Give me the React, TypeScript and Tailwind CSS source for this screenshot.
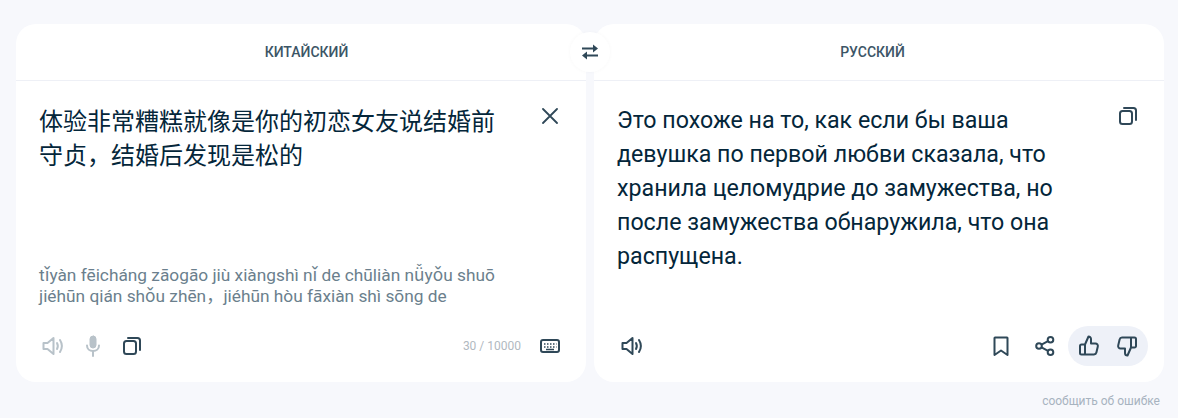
import React from 'react';

const ink = '#2f4858';

function Speaker({ color }: { color: string }) {
  return (
    <svg width="22" height="22" viewBox="0 0 22 22" fill="none" stroke={color} strokeWidth="2" strokeLinejoin="round" strokeLinecap="round">
      <path d="M1.500 8v6h4L11.500 19V3L5.500 8h-4z" />
      <path d="M15 8c1 1.800 1 4.200 0 6" />
      <path d="M18 5c2.200 3.500 2.200 8.500 0 12" />
    </svg>
  );
}

function Mic({ color }: { color: string }) {
  return (
    <svg width="22" height="22" viewBox="0 0 22 22" fill="none" stroke={color} strokeLinecap="round">
      <rect x="8" y="1" width="6" height="12" rx="3" fill={color} strokeWidth="1" />
      <path d="M5 10.500c0 3.500 2.600 5.500 6 5.500s6-2 6-5.500" strokeWidth="2" />
      <path d="M11 16v5" strokeWidth="2" />
    </svg>
  );
}

function Copy() {
  return (
    <svg width="20" height="20" viewBox="0 0 20 20" fill="none" stroke={ink} strokeWidth="2" strokeLinecap="round" strokeLinejoin="round">
      <rect x="2" y="5" width="12" height="13" rx="2.500" />
      <path d="M6 2h9.500A2.500 2.500 0 0 1 18 4.500V14" />
    </svg>
  );
}

function Keyboard() {
  return (
    <svg width="20" height="16" viewBox="0 0 20 16" fill="none">
      <rect x="1" y="2" width="18" height="12" rx="2" stroke={ink} strokeWidth="2" />
      <path d="M4 6h1.500M7 6h1.500M10 6h1.500M13 6h1.500M16 6h.5M4 9h1.500M7 9h1.500M10 9h1.500M13 9h1.500M16 9h.5M6 11.500h8" stroke={ink} strokeWidth="1.300" />
    </svg>
  );
}

function Bookmark() {
  return (
    <svg width="22" height="22" viewBox="0 0 22 22" fill="none" stroke={ink} strokeWidth="2" strokeLinejoin="round">
      <path d="M5 2.500h12a.5.5 0 0 1 .5.5v17L11 15.500 4.500 20V3a.5.5 0 0 1 .5-.5z" />
    </svg>
  );
}

function Share() {
  return (
    <svg width="22" height="22" viewBox="0 0 22 22" fill="none" stroke={ink} strokeWidth="2">
      <circle cx="5" cy="11" r="2.800" />
      <circle cx="16.500" cy="4.800" r="2.800" />
      <circle cx="16.500" cy="17.200" r="2.800" />
      <path d="M7.500 9.700l6.500-3.500M7.500 12.300l6.500 3.500" />
    </svg>
  );
}

function ThumbUp() {
  return (
    <svg width="22" height="22" viewBox="0 0 22 22" fill="none" stroke={ink} strokeWidth="2" strokeLinejoin="round" strokeLinecap="round">
      <path d="M7 9.500h-3.500a1.500 1.500 0 0 0-1.500 1.500v7a1.500 1.500 0 0 0 1.500 1.500H16a2.500 2.500 0 0 0 2.400-1.900l1.400-6a2.500 2.500 0 0 0-2.400-3.100H13V4a2.500 2.500 0 0 0-2.500-2.500L7 9.500v10" />
    </svg>
  );
}

function ThumbDown() {
  return (
    <svg width="22" height="22" viewBox="0 0 22 22" fill="none" stroke={ink} strokeWidth="2" strokeLinejoin="round" strokeLinecap="round">
      <path d="M15 12.500h3.500a1.500 1.500 0 0 0 1.500-1.500V4a1.500 1.500 0 0 0-1.500-1.500H6a2.500 2.500 0 0 0-2.400 1.900l-1.400 6a2.500 2.500 0 0 0 2.400 3.100H9V18a2.500 2.500 0 0 0 2.500 2.500l3.500-8v-10" />
    </svg>
  );
}

function Swap() {
  return (
    <svg width="16" height="16" viewBox="0 0 16 16" fill={ink}>
      <path d="M0 3.500h11v-3l5 4-5 4v-3H0z" />
      <path d="M16 10.500H5v-3l-5 4 5 4v-3h11z" />
    </svg>
  );
}

function X() {
  return (
    <svg width="16" height="16" viewBox="0 0 16 16" fill="none" stroke={ink} strokeWidth="1.800" strokeLinecap="round">
      <path d="M1 1l14 14M15 1L1 15" />
    </svg>
  );
}

export default function App() {
  return (
    <div className="flex h-[418px] w-[1178px] flex-col bg-[#f7f8fc] pl-4 pr-[14px] pt-6 font-['Roboto','Noto_Sans_CJK_SC',sans-serif]">
      <div className="relative flex h-[358px] gap-2">
        {/* source */}
        <div className="flex w-[570px] flex-col rounded-[20px] bg-white">
          <div className="flex h-[57px] shrink-0 items-center justify-center border-b border-[#eef0f6] pl-[11px] pt-[1px] text-[14px] font-medium text-[#3c5566]">
            КИТАЙСКИЙ
          </div>
          <div className="flex flex-1 flex-col pb-[25px] pl-[23px] pr-6 pt-[22px]">
            <div className="flex justify-between">
              <p className="w-[460px] text-[24px] leading-[34px] text-[#04263a] font-['Noto_Sans_CJK_SC','Roboto',sans-serif]">
                体验非常糟糕就像是你的初恋女友说结婚前守贞，结婚后发现是松的
              </p>
              <button className="mr-[4px] mt-[5px] h-4">
                <X />
              </button>
            </div>
            <p className="mt-auto w-[480px] text-[17.3px] leading-[21px] text-[#6b7f8d]">
              tǐyàn fēicháng zāogāo jiù xiàngshì nǐ de chūliàn nǚyǒu shuō jiéhūn qián shǒu zhēn，jiéhūn hòu fāxiàn shì sōng de
            </p>
            <div className="mt-[28px] flex items-center">
              <div className="flex items-center gap-[18px] pl-[3px]">
                <Speaker color="#b8c2c9" />
                <Mic color="#b8c2c9" />
                <Copy />
              </div>
              <span className="ml-auto text-[12px] text-[#b1b9bf]">30 / 10000</span>
              <span className="ml-[19px] mr-[2px] flex">
                <Keyboard />
              </span>
            </div>
          </div>
        </div>

        {/* translation */}
        <div className="flex w-[570px] flex-col rounded-[20px] bg-white">
          <div className="flex h-[57px] shrink-0 items-center justify-center border-b border-[#eef0f6] pr-[13px] pt-[1px] text-[14px] font-medium text-[#3c5566]">
            РУССКИЙ
          </div>
          <div className="flex flex-1 flex-col pl-[23px] pr-4 pt-[22px]">
            <div className="flex justify-between">
              <p className="w-[470px] text-[23.2px] leading-[34px] text-[#04263a]">
                Это похоже на то, как если бы ваша девушка по первой любви сказала, что хранила целомудрие до замужества, но после замужества обнаружила, что она распущена.
              </p>
              <button className="mr-[10px] mt-[3px] h-5">
                <Copy />
              </button>
            </div>
            <div className="mb-4 mt-auto flex items-center pl-[4px]">
              <Speaker color={ink} />
              <div className="ml-auto flex items-center gap-[22px]">
                <Bookmark />
                <Share />
              </div>
              <div className="ml-[12px] flex h-10 w-20 items-center justify-center gap-4 rounded-[20px] bg-[#eef1f8]">
                <ThumbUp />
                <ThumbDown />
              </div>
            </div>
          </div>
        </div>

        {/* swap button sits over both cards */}
        <button className="absolute left-[554px] top-2 flex h-10 w-10 items-center justify-center rounded-full bg-white shadow-[0_0_4px_rgba(0,0,0,0.03)]">
          <Swap />
        </button>
      </div>
      <div className="mt-[10px] pr-1 text-right text-[12px] leading-[18px] text-[#a7b3c0]">сообщить об ошибке</div>
    </div>
  );
}
